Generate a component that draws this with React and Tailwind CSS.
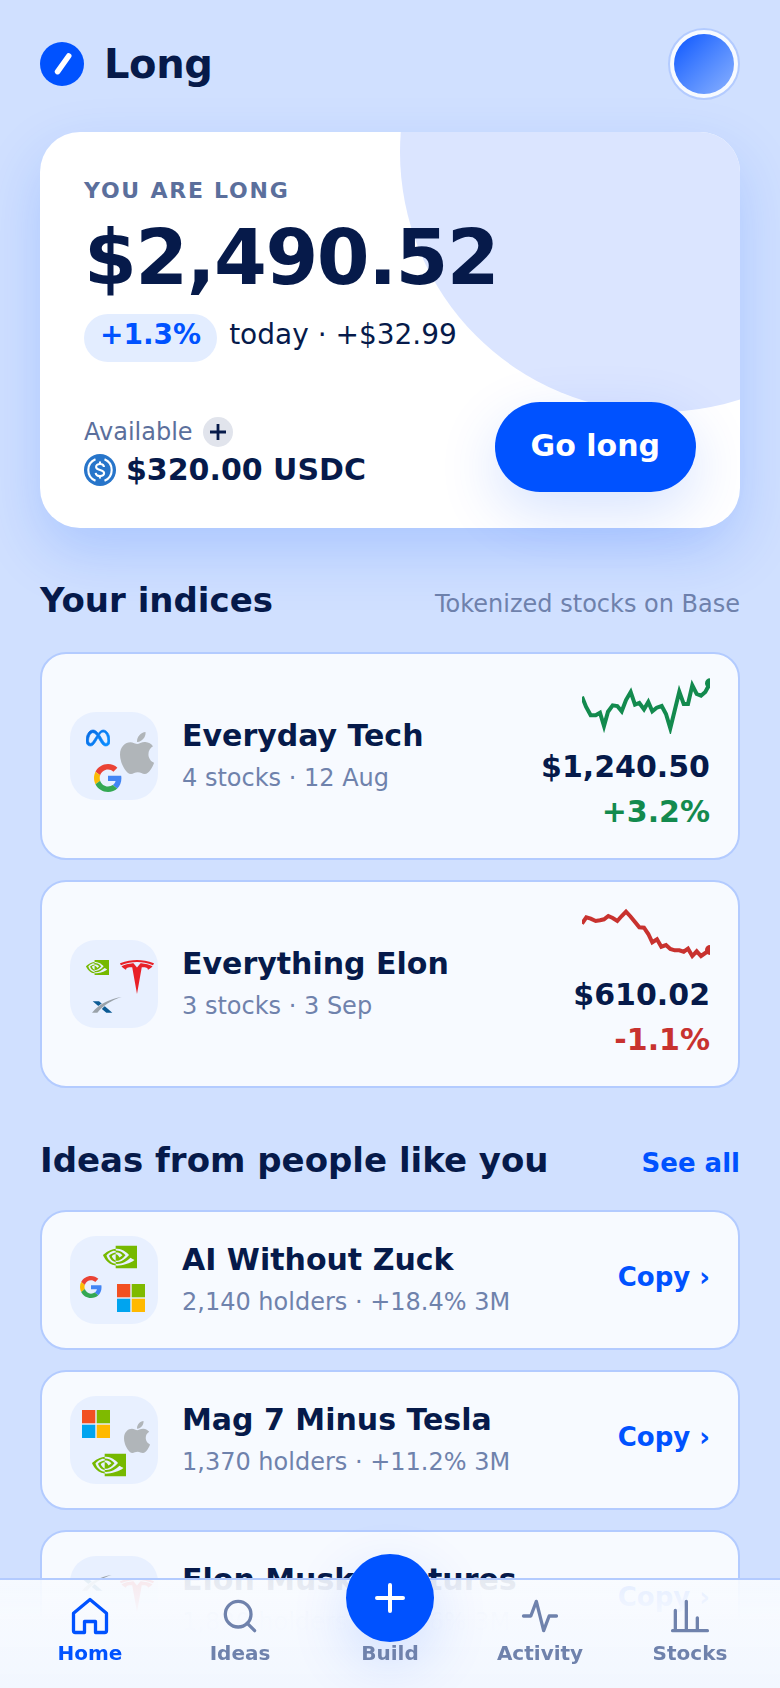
import React from "react";
import { SiMeta, SiNvidia, SiTesla } from "react-icons/si";

function AppleMark({ className }) {
  return (
    <svg viewBox="4 32 376 448" preserveAspectRatio="none" className={className} aria-hidden="true">
      <path
        fill="#b0b5b9"
        d="M318.7 268.7c-.2-36.7 16.4-64.4 50-84.8-18.8-26.9-47.2-41.7-84.7-44.6-35.5-2.8-74.3 20.7-88.5 20.7-15 0-49.4-19.7-76.4-19.7C63.3 141.2 4 184.8 4 273.5q0 39.3 14.4 81.2c12.8 36.7 59 126.7 107.2 125.2 25.2-.6 43-17.9 75.8-17.9 31.8 0 48.3 17.9 76.4 17.9 48.6-.7 90.4-82.5 102.6-119.3-65.2-30.7-61.7-90-61.7-91.9zm-56.6-164.2c27.3-32.4 24.8-61.9 24-72.5-24.1 1.4-52 16.4-67.9 34.9-17.5 19.8-27.8 44.3-25.6 71.9 26.1 2 49.9-11.4 69.5-34.3z"
      />
    </svg>
  );
}

function GoogleMark({ className }) {
  return (
    <svg viewBox="0 0 48 48" className={className} aria-hidden="true">
      <path fill="#EA4335" d="M24 9.5c3.54 0 6.71 1.22 9.21 3.6l6.85-6.85C35.9 2.38 30.47 0 24 0 14.62 0 6.51 5.38 2.56 13.22l7.98 6.19C12.43 13.72 17.74 9.5 24 9.5z" />
      <path fill="#4285F4" d="M46.98 24.55c0-1.57-.15-3.09-.38-4.55H24v9.02h12.94c-.58 2.96-2.26 5.48-4.78 7.18l7.73 6c4.51-4.18 7.09-10.36 7.09-17.65z" />
      <path fill="#FBBC05" d="M10.53 28.59c-.48-1.45-.76-2.99-.76-4.59s.27-3.14.76-4.59l-7.98-6.19C.92 16.46 0 20.12 0 24c0 3.88.92 7.54 2.56 10.78l7.97-6.19z" />
      <path fill="#34A853" d="M24 48c6.48 0 11.93-2.13 15.89-5.81l-7.73-6c-2.15 1.45-4.92 2.3-8.16 2.3-6.26 0-11.57-4.22-13.47-9.91l-7.98 6.19C6.51 42.62 14.62 48 24 48z" />
    </svg>
  );
}

function MicrosoftMark({ className }) {
  return (
    <svg viewBox="0 0 28 28" className={className} aria-hidden="true">
      <path fill="#F25022" d="M0 0h13.3v13.3H0z" />
      <path fill="#7FBA00" d="M14.7 0H28v13.3H14.7z" />
      <path fill="#00A4EF" d="M0 14.7h13.3V28H0z" />
      <path fill="#FFB900" d="M14.7 14.7H28V28H14.7z" />
    </svg>
  );
}

function SpaceXMark({ className }) {
  return (
    <svg viewBox="0 0 90 48" className={className} aria-hidden="true">
      <path fill="#0b5a94" d="M2 13h19l40 34H43z" />
      <path fill="#e8f0ff" d="M-2 48C20 19 55 3 89 0 60 9 37 24 20 48z" />
      <path fill="#9aa2a9" d="M0 47C22 21 54 5 89 0 58 10 35 25 16 47z" />
    </svg>
  );
}

function MetaMark({ className }) {
  return (
    <>
      <svg className="absolute size-0" aria-hidden="true">
        <defs>
          <linearGradient id="meta-blue" x1="0" x2="1" y1="0" y2="0.6">
            <stop offset="0" stopColor="#0668e1" />
            <stop offset="1" stopColor="#0a8cff" />
          </linearGradient>
        </defs>
      </svg>
      <SiMeta className={className} fill="url(#meta-blue)" stroke="url(#meta-blue)" strokeWidth="0.7" aria-hidden="true" />
    </>
  );
}

function Tile({ children }) {
  return <div className="relative size-[88px] shrink-0 rounded-[26px] bg-[#e8f0ff]">{children}</div>;
}

function Sparkline({ points, endY, className }) {
  return (
    <svg viewBox="0 0 128 56" className={`mb-[10px] h-14 w-32 overflow-hidden ${className}`} aria-hidden="true">
      <polyline points={points} fill="none" stroke="currentColor" strokeWidth="4" />
      <circle cx="128" cy={endY} r="5" fill="currentColor" />
    </svg>
  );
}

function Names({ title, detail }) {
  return (
    <div className="min-w-0 flex-1 pt-0.5">
      <h3 className="text-[30px] leading-[42px] font-bold">{title}</h3>
      <p className="text-2xl leading-[42px] text-[#6f82ac]">{detail}</p>
    </div>
  );
}

const cardClass =
  "flex items-center gap-6 rounded-[26px] border-2 border-[#b3cbff] bg-[#f7faff] px-7 py-6";

function IndexCard({ title, detail, value, change, tone, points, endY, children }) {
  return (
    <li className={cardClass}>
      <Tile>{children}</Tile>
      <Names title={title} detail={detail} />
      <div className="flex flex-col items-end text-[30px] leading-[45px] font-bold">
        <Sparkline points={points} endY={endY} className={tone} />
        <span>{value}</span>
        <span className={tone}>{change}</span>
      </div>
    </li>
  );
}

function IdeaCard({ title, detail, children }) {
  return (
    <li className={cardClass}>
      <Tile>{children}</Tile>
      <Names title={title} detail={detail} />
      <button type="button" className="pb-1.5 text-[26px] font-bold text-[#0052ff]">
        Copy ›
      </button>
    </li>
  );
}

function NavItem({ label, active, children }) {
  return (
    <a
      href="#"
      className={`flex flex-1 flex-col items-center pt-[14px] text-xl leading-6 font-bold ${active ? "text-[#0052ff]" : "text-[#6f82ac]"}`}
    >
      <svg
        viewBox="0 0 24 24"
        className="mb-[3px] size-11"
        fill="none"
        stroke="currentColor"
        strokeWidth="1.8"
        strokeLinecap="round"
        strokeLinejoin="round"
        aria-hidden="true"
      >
        {children}
      </svg>
      {label}
    </a>
  );
}

const techPoints =
  "0,18.7 4,28.7 8.7,37.3 13.7,37.3 18,34.7 22,48 26,33.7 30.7,27.3 35.3,28 39.7,33.3 44,22 48.7,14 53,26.7 57.3,25 62,31.3 66.3,24 70.3,33.3 74.7,29.7 79.7,28 84,36 88.3,50.3 93,31.3 97.3,13.7 101.7,26 106,26 110.3,7.3 114.7,16 119,17.7 123.3,14 128,5.3";
const elonPoints =
  "0,17.7 4.3,11.3 8.7,12.7 13.7,15 18,14.3 22,13.3 26.3,10 30.7,12 35.3,15 39.7,10 44,5.7 48.7,10.7 53,16 57.3,21.3 62,21.7 66.3,28 70.3,36.3 75,33.3 79.3,40.7 84,39 88.3,43 92.7,44.3 97.3,44.3 101.7,45.7 106,42.7 110.3,50 114.7,45.3 119,50 123.3,47 128,44";

export default function App() {
  return (
    <div className="h-screen overflow-hidden bg-[#d0e0ff] font-['DejaVu_Sans',sans-serif] text-[#061a4a]">
      <div className="h-full overflow-y-auto px-10 pt-7 pb-36 [scrollbar-width:none]">
        <header className="flex items-center justify-between">
          <div className="flex items-center gap-5">
            <svg viewBox="0 0 44 44" className="size-11" aria-hidden="true">
              <circle cx="22" cy="22" r="22" fill="#0052ff" />
              <path d="M17.600 29.600 28.700 14" stroke="#fff" strokeWidth="5.6" strokeLinecap="round" />
            </svg>
            <h1 className="text-[40px] leading-[48px] font-bold tracking-[-0.01em]">Long</h1>
          </div>
          <button
            type="button"
            aria-label="Profile"
            className="size-[72px] rounded-full border-2 border-[#b3cbff] bg-[#f7faff] p-1"
          >
            <span className="block size-full rounded-full bg-linear-135 from-[#0052ff] to-[#8ab0ff]" />
          </button>
        </header>

        <section className="relative mt-8 rounded-[40px] bg-white px-11 pt-11 pb-9 shadow-[0_24px_60px_rgba(0,82,255,0.18)]">
          <div className="absolute inset-0 overflow-hidden rounded-[40px]">
            <div className="absolute -top-60 -right-45 size-[520px] rounded-full bg-[#dbe5ff]" />
          </div>
          <div className="relative">
            <p className="text-[22px] leading-[30px] font-bold tracking-[0.08em] text-[#5b6f9c]">YOU ARE LONG</p>
            <p className="mt-2 text-[76px] leading-[88px] font-bold tracking-[-0.02em]">$2,490.52</p>
            <p className="mt-3 flex items-center gap-3 text-[28px] leading-[42px]">
              <span className="rounded-full bg-[#e3edff] px-4 pb-1.5 font-bold text-[#0052ff]">+1.3%</span>
              <span className="pb-1.5">today · +$32.99</span>
            </p>
            <div className="mt-10 flex items-center justify-between">
              <div className="pt-[10px]">
                <div className="flex items-center gap-[10px]">
                  <span className="text-2xl leading-8 text-[#5b6f9c]">Available</span>
                  <button
                    type="button"
                    aria-label="Add funds"
                    className="grid size-[30px] place-items-center rounded-full bg-[#e1e4ec]"
                  >
                    <svg viewBox="0 0 16 16" className="size-4" stroke="currentColor" strokeWidth="2.8" aria-hidden="true">
                      <path d="M8 0v16M0 8h16" />
                    </svg>
                  </button>
                </div>
                <div className="mt-1 flex items-center gap-[10px]">
                  <svg viewBox="0 0 32 32" className="size-8" fill="none" aria-hidden="true">
                    <circle cx="16" cy="16" r="16" fill="#2775ca" />
                    <path
                      d="M11.500 5.200a11.700 11.700 0 0 0 0 21.600M20.500 5.200a11.700 11.700 0 0 1 0 21.600"
                      stroke="#fff"
                      strokeWidth="2.1"
                    />
                    <path
                      d="M20 13c-.2-2-1.700-3-4-3-2.400 0-3.900 1.100-3.900 2.900 0 4.200 8 1.800 8 6.200 0 1.900-1.700 3-4.100 3-2.500 0-4.100-1.100-4.300-3.200M16 7.500V10M16 22v2.500"
                      stroke="#fff"
                      strokeWidth="2.1"
                    />
                  </svg>
                  <span className="text-[30px] leading-9 font-bold">$320.00 USDC</span>
                </div>
              </div>
              <button
                type="button"
                className="rounded-full bg-[#0052ff] px-9 pt-[22px] pb-6 text-[30px] leading-[44px] font-bold text-white shadow-[0_20px_60px_rgba(0,82,255,0.16)]"
              >
                Go long
              </button>
            </div>
          </div>
        </section>

        <div className="mt-[52px] mb-8 flex items-baseline justify-between">
          <h2 className="text-[34px] leading-10 font-bold">Your indices</h2>
          <p className="text-2xl leading-8 text-[#6f82ac]">Tokenized stocks on Base</p>
        </div>
        <ul className="flex flex-col gap-5">
          <IndexCard
            title="Everyday Tech"
            detail="4 stocks · 12 Aug"
            value="$1,240.50"
            change="+3.2%"
            tone="text-[#138a4e]"
            points={techPoints}
            endY="5.3"
          >
            <MetaMark className="absolute top-[14px] left-4 size-6" />
            <AppleMark className="absolute top-5 left-[50px] h-[42px] w-[34px]" />
            <GoogleMark className="absolute top-[52px] left-6 size-7" />
          </IndexCard>
          <IndexCard
            title="Everything Elon"
            detail="3 stocks · 3 Sep"
            value="$610.02"
            change="-1.1%"
            tone="text-[#c8322f]"
            points={elonPoints}
            endY="44"
          >
            <SiNvidia className="absolute top-4 left-4 size-[23px] text-[#76b900]" aria-hidden="true" />
            <SiTesla className="absolute top-5 left-[50px] size-[34px] text-[#e82127]" aria-hidden="true" />
            <SpaceXMark className="absolute top-[57px] left-[22px] h-4 w-[30px]" />
          </IndexCard>
        </ul>

        <div className="mt-[52px] mb-[30px] flex items-baseline justify-between">
          <h2 className="text-[34px] leading-10 font-bold">Ideas from people like you</h2>
          <a href="#" className="text-[26px] leading-8 font-bold text-[#0052ff]">
            See all
          </a>
        </div>
        <ul className="flex flex-col gap-5">
          <IdeaCard title="AI Without Zuck" detail="2,140 holders · +18.4% 3M">
            <SiNvidia className="absolute top-1 left-[33px] size-[34px] text-[#76b900]" aria-hidden="true" />
            <GoogleMark className="absolute top-10 left-[10px] size-[22px]" />
            <MicrosoftMark className="absolute top-12 left-[47px] size-7" />
          </IdeaCard>
          <IdeaCard title="Mag 7 Minus Tesla" detail="1,370 holders · +11.2% 3M">
            <MicrosoftMark className="absolute top-[14px] left-3 size-7" />
            <AppleMark className="absolute top-[25px] left-[54px] h-8 w-[26px]" />
            <SiNvidia className="absolute top-[52px] left-[22px] size-[34px] text-[#76b900]" aria-hidden="true" />
          </IdeaCard>
          <IdeaCard title="Elon Musk Ventures" detail="1,820 holders · +21.6% 3M">
            <SpaceXMark className="absolute top-[19px] left-3 h-4 w-[30px]" />
            <SiTesla className="absolute top-[22px] left-[50px] size-[34px] text-[#e82127]" aria-hidden="true" />
          </IdeaCard>
        </ul>
      </div>

      <nav className="fixed inset-x-0 bottom-0 flex h-[110px] border-t-2 border-[#b3cbff] bg-linear-to-b from-[#f8fbff]/92 via-[#f7faff]/99 via-35% to-[#f2f7ff] px-[15px]">
        <NavItem label="Home" active>
          <path d="M3 10.500 12 3l9 7.500V20a1 1 0 0 1-1 1h-5v-6H9v6H4a1 1 0 0 1-1-1z" />
        </NavItem>
        <NavItem label="Ideas">
          <circle cx="11" cy="11" r="7" />
          <path d="m20 20-4-4" />
        </NavItem>
        <a href="#" className="relative flex flex-1 flex-col items-center pt-[61px] text-xl leading-6 font-bold text-[#6f82ac]">
          <span className="absolute -top-[26px] grid size-[88px] place-items-center rounded-full bg-[#0052ff] text-white shadow-[0_20px_60px_rgba(0,82,255,0.16)]">
            <svg viewBox="0 0 30 30" className="size-[30px]" stroke="currentColor" strokeWidth="4" strokeLinecap="round" aria-hidden="true">
              <path d="M15 2v26M2 15h26" />
            </svg>
          </span>
          <span className="relative">Build</span>
        </a>
        <NavItem label="Activity">
          <path d="M3 12h4l3-8 4 16 3-8h4" />
        </NavItem>
        <NavItem label="Stocks">
          <path d="M4 20V9M10 20V4M16 20v-7M2.500 20h19" />
        </NavItem>
      </nav>
    </div>
  );
}
